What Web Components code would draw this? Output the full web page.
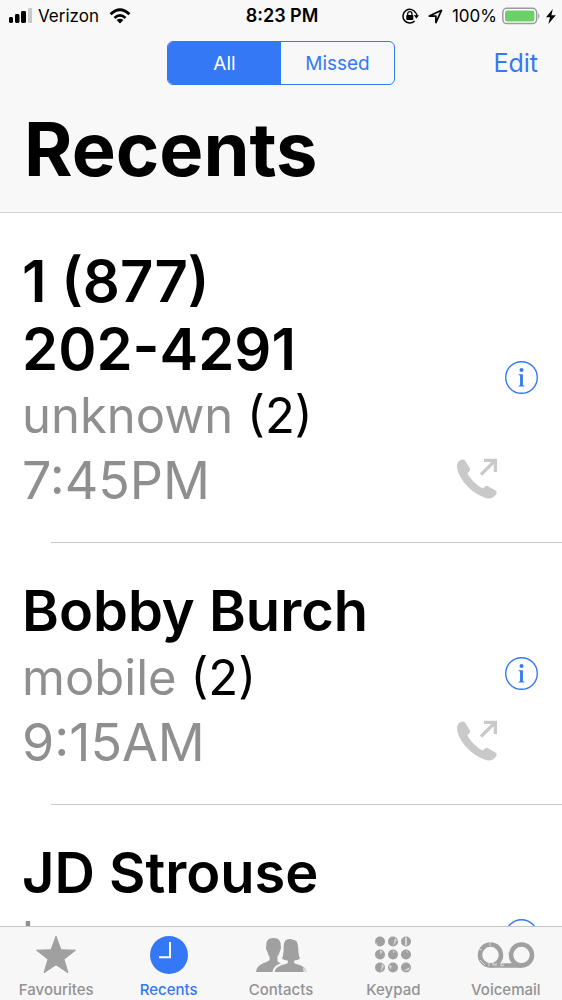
<!DOCTYPE html>
<html lang="en">
<head>
<meta charset="utf-8">
<meta name="viewport" content="width=device-width, initial-scale=1">
<title>Recents</title>
<style>
html, body { margin: 0; height: 100%; }
body { background: #fff; color: #000; font-family: Inter, "Liberation Sans", sans-serif; --blue: #3478f6; --grey: #8f8f8f; }
</style>
</head>
<body>
<phone-app></phone-app>
<script>
const define = (name, html) => {
  const t = document.createElement('template');
  t.innerHTML = html;
  customElements.define(name, class extends HTMLElement {
    constructor() {
      super();
      this.attachShadow({ mode: 'open' }).append(t.content.cloneNode(true));
    }
  });
};

define('status-bar', `
<style>
:host { display: grid; grid-template-columns: 1fr auto 1fr; align-items: center; height: 32px; padding: 0 6px 0 8px; font-size: 17px; line-height: 20px; }
.side { display: flex; align-items: center; gap: 6px; }
.wifi { margin-left: 4px; }
.end { justify-content: flex-end; gap: 5px; }
.lock { margin-right: 4px; }
.arrow { margin-right: 4px; }
time { font-weight: 600; font-size: 18px; }
svg { display: block; flex: none; }
</style>
<div class="side">
  <svg width="24" height="16" viewBox="0 0 24 16" aria-label="Signal"><rect x="1" y="9" width="4" height="6" rx="1.4"/><rect x="7" y="6" width="4.5" height="9" rx="1.4"/><rect x="13" y="3" width="5" height="12" rx="1.4"/><rect x="20" y="0" width="4.5" height="15" rx="1.4" fill="#c8c8c8"/></svg>
  <span>Verizon</span>
  <svg class="wifi" width="22" height="16" viewBox="1 0 22 16" aria-label="Wi-Fi" fill="none" stroke="#000" stroke-width="2.8"><path d="M2.6 6.2Q12-2.8 21.4 6.2"/><path d="M6.5 10Q12 4.8 17.5 10"/><path d="M12 15.4L8.6 12.1Q12 9.4 15.4 12.1Z" fill="#000" stroke="none"/></svg>
</div>
<time>8:23 PM</time>
<div class="side end">
  <svg class="lock" width="17" height="16" viewBox="0 0 17 16" aria-label="Rotation lock"><path d="M13.9 5.2A6.8 6.8 0 1 0 12.6 13M14.3 5.2Q14.8 6.5 14.6 8" fill="none" stroke="#000" stroke-width="1.5"/><path d="M11.8 7.2H17L14.4 10.6Z"/><rect x="4.3" y="7" width="7" height="5" rx=".8"/><path d="M5.7 7.4V5.8a2.1 2.1 0 0 1 4.2 0V7.4" fill="none" stroke="#000" stroke-width="1.3"/></svg>
  <svg class="arrow" width="15" height="15" viewBox="0 0 15 15" aria-label="Location"><path d="M1.3 7.1L13.5 1.3L7.9 13.6V7.1Z" fill="none" stroke="#000" stroke-width="1.7" stroke-linejoin="round"/></svg>
  <span>100%</span>
  <svg width="39" height="18" viewBox="0 0 39 18" aria-label="Battery"><rect x=".8" y="1.2" width="33.8" height="15.4" rx="4.2" fill="#fff" stroke="#9a9a9a" stroke-width="1.5"/><rect x="3" y="3.4" width="29.4" height="11" rx="2.2" fill="#6bd068"/><path d="M36.2 6Q38.8 9 36.2 12Z" fill="#9a9a9a"/></svg>
  <svg width="10" height="15" viewBox="0 0 10 15" aria-label="Charging"><path d="M6.8 0L0 8.2H4L2.4 15L9.8 6.2H5.4Z"/></svg>
</div>`);

define('call-filter', `
<style>
:host { display: block; }
div { display: grid; grid-template-columns: 1fr 1fr; box-sizing: border-box; width: 228px; height: 44px; border: 1px solid var(--blue); border-radius: 6px; overflow: hidden; }
button { margin: 0; padding: 2px 0 0; border: 0; background: transparent; color: var(--blue); font: 400 19px/24px Inter, sans-serif; }
button[aria-pressed=true] { background: var(--blue); color: #fff; }
</style>
<div role="group" aria-label="Filter calls"><button aria-pressed="true">All</button><button aria-pressed="false">Missed</button></div>`);

define('app-header', `
<style>
:host { display: block; background: #f8f8f8; border-bottom: 1px solid #d4d4d6; }
nav { display: grid; grid-template-columns: 1fr auto 1fr; align-items: center; height: 62px; padding: 0 24px; }
.edit { justify-self: end; padding: 0; border: 0; background: none; color: var(--blue); font: 400 25px/30px Inter, sans-serif; }
h1 { margin: 0; padding: 10px 24px 17px; font-size: 74px; line-height: 91px; font-weight: 700; }
</style>
<status-bar></status-bar>
<nav><span></span><call-filter></call-filter><button class="edit">Edit</button></nav>
<h1>Recents</h1>`);

define('call-row', `
<style>
:host { display: flex; align-items: center; gap: 7px; min-height: 261px; padding: 0 23px 0 22px; border-bottom: 1px solid transparent; border-image: linear-gradient(to right, transparent 52px, #c8c7cc 52px) 1; }
.text { flex: 1; align-self: flex-start; min-width: 0; padding: 34px 0 29px; line-height: 65px; color: var(--grey); }
h2 { margin: 0; font-size: 56px; line-height: 68px; font-weight: 600; color: #000; max-width: 400px; }
:host([number]) h2 { font-size: 58px; }
.label { font-size: 49px; }
.count { color: #000; }
.when { display: flex; align-items: center; justify-content: space-between; font-size: 52px; }
.when svg { margin-bottom: 4px; }
:host([past]) .when { display: none; }
button { flex: none; width: 34px; height: 34px; padding: 0; border: 0; background: none; }
svg { display: block; }
</style>
<div class="text">
  <h2><slot name="name"></slot></h2>
  <div class="label"><slot name="label"></slot> <span class="count"><slot name="count"></slot></span></div>
  <div class="when"><slot name="time"></slot>
    <svg width="42" height="42" viewBox="0 0 42 42" aria-label="Outgoing call"><path d="M2.2 3.8C4.2 1.4 7.5.4 9 2.6L14 10.4Q14.6 11.8 13.3 13.2L11.4 15.3C14 21 21 27.6 26.7 30.5L29.2 28.5Q30.4 27.4 32 28.2L39.5 32.6Q41.7 34.2 39.8 36.8C37 40.6 33 41.4 28.4 39.4C16 35 5 24 1.3 11.4Q.2 7 2.2 3.8Z" fill="#c9c9c9"/><path d="M25 16.6L38.6 3M28 2.4H39.4V14" fill="none" stroke="#c9c9c9" stroke-width="3.3"/></svg>
  </div>
</div>
<button aria-label="More info"><svg width="34" height="34" viewBox="0 0 34 34"><circle cx="16.5" cy="16.5" r="15.8" fill="none" stroke="#3478f6" stroke-width="1.4"/><circle cx="16.5" cy="9" r="2" fill="#3478f6"/><path d="M13.5 13.2H17.9V24.2L19.4 24.7V25.5H13.6V24.7L15.1 24.2V14.5L13.5 14Z" fill="#3478f6"/></svg></button>`);

define('tab-item', `
<style>
:host { display: block; color: #929292; }
:host([current]) { color: var(--blue); }
a { display: flex; flex-direction: column; align-items: center; gap: 6px; padding-top: 8px; color: inherit; text-decoration: none; font-size: 15px; line-height: 18px; font-weight: 500; }
</style>
<a href="#"><slot name="icon"></slot><slot></slot></a>`);

define('tab-bar', `
<style>
:host { display: grid; grid-template-columns: repeat(5, 1fr); height: 73px; background: #f7f7f8; border-top: 1px solid #c6c6c8; }
svg { display: block; height: 40px; fill: #a0a0a0; }
</style>
<tab-item><svg slot="icon" width="42" viewBox="0 0 42 40"><path d="M21 1.2L26 14.8L40.6 15.2L29 24.2L33 37.8L21 29.8L9 37.8L13 24.2L1.4 15.2L16 14.8Z" stroke="#a0a0a0" stroke-linejoin="round"/></svg>Favourites</tab-item>
<tab-item current><svg slot="icon" width="40" viewBox="0 0 40 40"><circle cx="20" cy="20" r="19" fill="#3478f6"/><path d="M21 7V22.3H10" fill="none" stroke="#fff" stroke-width="2"/></svg>Recents</tab-item>
<tab-item><svg slot="icon" width="52" viewBox="0 0 52 40"><path d="M18.5 3C13 3 11 6 11.3 11Q10.5 12 11.3 14.5L12.5 17Q13 20 14.6 21.5V25C12 28 2 28 1 37H17.5C18.5 31 23 29.5 26 28.3Q22.3 27.5 22.4 25V21.5Q24.4 19.5 24.6 17L25.6 14.5Q26.5 12 25.7 11C26 6 24 3 18.5 3Z"/><path d="M35.5 4C29.5 3.6 28.8 8 28.7 13Q28.6 20 27 23.6Q29 25.4 32.8 25.6V28C30 30 21 29.5 19.6 37H51.5C50.5 29.5 42 30 39.2 28V25.6Q43 25.4 45 23.6Q43.3 20 43.2 13C43 7 41 4.8 38 5Q37 4 35.5 4Z"/><path d="M48 32Q51 33.5 51.5 37H48.5Z" fill="#dcdcdc"/></svg>Contacts</tab-item>
<tab-item><svg slot="icon" width="38" viewBox="0 0 38 40"><g><circle cx="6" cy="6.5" r="5"/><circle cx="19" cy="6.5" r="5"/><circle cx="32" cy="6.5" r="5"/><circle cx="6" cy="19.5" r="5"/><circle cx="19" cy="19.5" r="5"/><circle cx="32" cy="19.5" r="5"/><circle cx="6" cy="32.5" r="5"/><circle cx="19" cy="32.5" r="5"/><circle cx="32" cy="32.5" r="5"/></g><path d="M1.4 6L4 10.8L2 9.6ZM21 3L23 5L19 11ZM31 2L33 3V10L31 11ZM6 15L9 17L6 19ZM19 15L21 17L19 18ZM32 15L34 17L33 18ZM8 28L10 31L7 37ZM15 30L18 31L16 35ZM36 32L35 35L29 36Z" fill="#d8d8d8"/></svg>Keypad</tab-item>
<tab-item><svg slot="icon" width="58" viewBox="0 0 58 40"><g fill="none" stroke="#a0a0a0" stroke-width="4.5"><circle cx="13.5" cy="20" r="10.5"/><circle cx="44.5" cy="20" r="10.5"/><path d="M13.5 30.5H44.5"/></g><path d="M13 7V11M2 14L5 15M3 25L8 30M12 28V31M16 31V28L19 31V28M27 28Q23 28 24 31L27 30M33 14L31 20" fill="none" stroke="#dcdcdc" stroke-width="1"/></svg>Voicemail</tab-item>`);

define('phone-app', `
<style>
:host { display: flex; flex-direction: column; height: 100vh; }
app-header, tab-bar { flex: none; }
main { flex: 1; min-height: 0; overflow: hidden; }
.number { white-space: nowrap; }
</style>
<app-header></app-header>
<main>
<call-row number><span slot="name">1 (877) <span class="number">202-4291</span></span><span slot="label">unknown</span><span slot="count">(2)</span><span slot="time">7:45PM</span></call-row>
<call-row><span slot="name">Bobby Burch</span><span slot="label">mobile</span><span slot="count">(2)</span><span slot="time">9:15AM</span></call-row>
<call-row past><span slot="name">JD Strouse</span><span slot="label">home</span></call-row>
</main>
<tab-bar></tab-bar>`);
</script>
</body>
</html>
